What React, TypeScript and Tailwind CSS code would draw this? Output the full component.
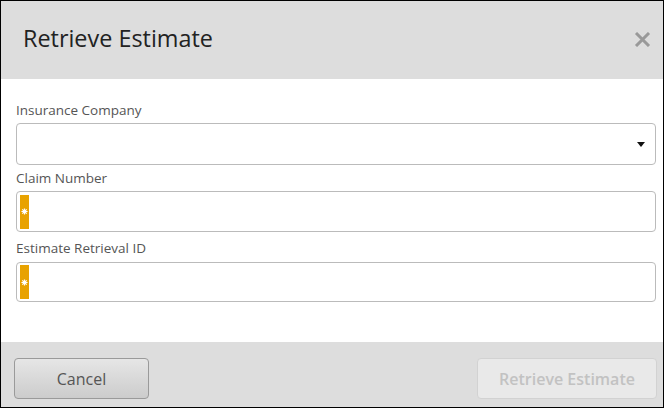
import React from "react";

function Required() {
  return (
    <div className="w-[9px] h-[34px] bg-[#e8a200] flex items-center justify-center">
      <svg width="7" height="7" viewBox="0 0 8 8">
        <path d="M4 0.5 V7.5 M0.5 4 H7.5 M1.5 1.5 L6.5 6.5 M6.5 1.5 L1.5 6.5" stroke="#fff" strokeWidth="1.4" />
      </svg>
    </div>
  );
}

export default function App() {
  const font = { fontFamily: '"Open Sans", "Noto Sans", sans-serif' };
  return (
    <div className="w-[664px] h-[408px] border border-black bg-white flex flex-col box-border" style={font}>
      <div className="h-[78px] bg-[#dddddd] flex items-center justify-between pl-[22px] pr-[12px] shrink-0">
        <h1 className="text-[23.4px] text-[#222] leading-none pb-[2px]">Retrieve Estimate</h1>
        <button className="w-[17px] h-[15px] flex items-center justify-center mb-[1px]">
          <svg width="17" height="15" viewBox="0 0 17 15">
            <path d="M2 1 L15 14 M15 1 L2 14" stroke="#999" strokeWidth="3" strokeLinecap="butt" />
          </svg>
        </button>
      </div>
      <div className="flex-1 flex flex-col pl-[15px] pr-[7px] pt-[21px]">
        <label className="text-[13.5px] text-[#555] leading-[20px]">Insurance Company</label>
        <div className="mt-[3px] h-[42px] border border-[#bbbbbb] rounded-[4px] flex items-center justify-end pr-[10px]">
          <svg width="8" height="5" viewBox="0 0 8 5">
            <path d="M0 0 L8 0 L4 5 Z" fill="#111" />
          </svg>
        </div>
        <label className="mt-[3px] text-[13.5px] text-[#555] leading-[20px]">Claim Number</label>
        <div className="mt-[3px] h-[41px] border border-[#bbbbbb] rounded-[4px] flex items-center pl-[3px]">
          <Required />
        </div>
        <label className="mt-[6px] text-[13.5px] text-[#555] leading-[20px]">Estimate Retrieval ID</label>
        <div className="mt-[4px] h-[40px] border border-[#bbbbbb] rounded-[4px] flex items-center pl-[3px]">
          <Required />
        </div>
      </div>
      <div className="h-[65px] bg-[#dddddd] flex items-start justify-between pl-[13px] pr-[6px] pt-[16px] shrink-0">
        <button className="w-[135px] h-[41px] rounded-[4px] border border-[#9a9a9a] bg-gradient-to-b from-[#e6e6e6] to-[#cccccc] text-[16px] text-[#555]">
          Cancel
        </button>
        <button className="w-[180px] h-[41px] rounded-[4px] border border-[#d2d2d2] bg-[#e9e9e9] text-[16px] font-semibold text-[#c2c2c2]">
          Retrieve Estimate
        </button>
      </div>
    </div>
  );
}
